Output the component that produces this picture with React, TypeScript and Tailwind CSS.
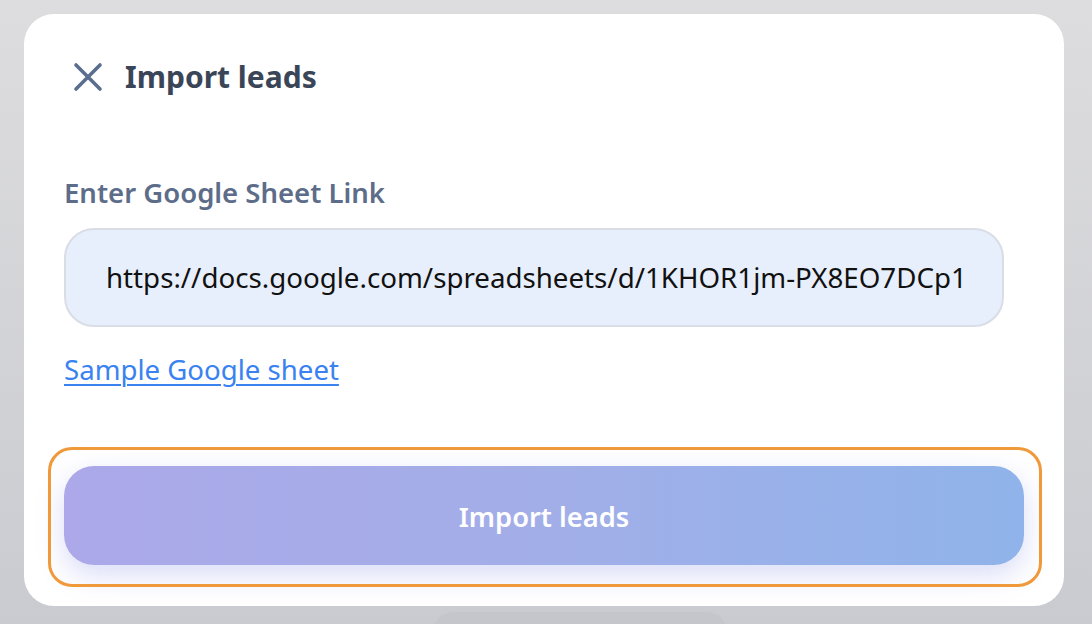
import React from "react";

const CloseIcon = () => (
    <svg width="30" height="30" viewBox="0 0 30 30" fill="none" className="shrink-0">
        <path d="M3 3 L27 27 M27 3 L3 27" stroke="#5a6e8e" strokeWidth="3.6" strokeLinecap="round" />
    </svg>
);

export default function App() {
    return (
        <div
            className="w-full h-[624px] overflow-hidden bg-gradient-to-b from-[#dddddf] to-[#cacbd0] pt-[14px] pl-[24px]"
            style={{ fontFamily: '"Noto Sans", "Open Sans", sans-serif' }}
        >
            <div className="w-[1040px] h-[592px] rounded-[30px] bg-white px-[40px] pt-[43px]">
                <div className="flex items-center gap-[22px] h-[40px] pl-[9px]">
                    <CloseIcon />
                    <h1 className="text-[30px] font-bold text-[#3a4557] leading-none">Import leads</h1>
                </div>

                <label className="block mt-[78px] text-[27.5px] font-semibold text-[#5d6d89] leading-[36px]">
                    Enter Google Sheet Link
                </label>

                <div className="mt-[17px] h-[99px] w-[940px] rounded-[30px] border-2 border-[#d8dde6] bg-[#e8effc] flex items-center pl-[40px]">
                    <span className="text-[27.7px] text-[#111111] whitespace-nowrap">
                        https://docs.google.com/spreadsheets/d/1KHOR1jm-PX8EO7DCp1
                    </span>
                </div>

                <a href="#" className="inline-block mt-[24px] text-[27.6px] leading-[36px] text-[#3a82f0] underline underline-offset-[4px] decoration-[2px]">
                    Sample Google sheet
                </a>

                <div className="relative mt-[60px] -ml-[16px] w-[994px] pt-[19px] pb-[22px] pl-[16px] pr-[18px]">
                    <span className="absolute inset-0 rounded-[24px] border-[3px] border-[#f0993a] pointer-events-none" />
                    <button className="w-[960px] h-[99px] pt-[3px] rounded-[30px] bg-gradient-to-r from-[#aca8e9] via-[#a2aee8] to-[#8fb3ea] text-white text-[27.3px] font-semibold shadow-[0_10px_28px_rgba(120,130,225,0.28)]">
                        Import leads
                    </button>
                </div>
            </div>
            <div className="ml-[409px] mt-[6px] w-[294px] h-[20px] rounded-t-[30px] bg-[#c5c6cb]" />
        </div>
    );
}
